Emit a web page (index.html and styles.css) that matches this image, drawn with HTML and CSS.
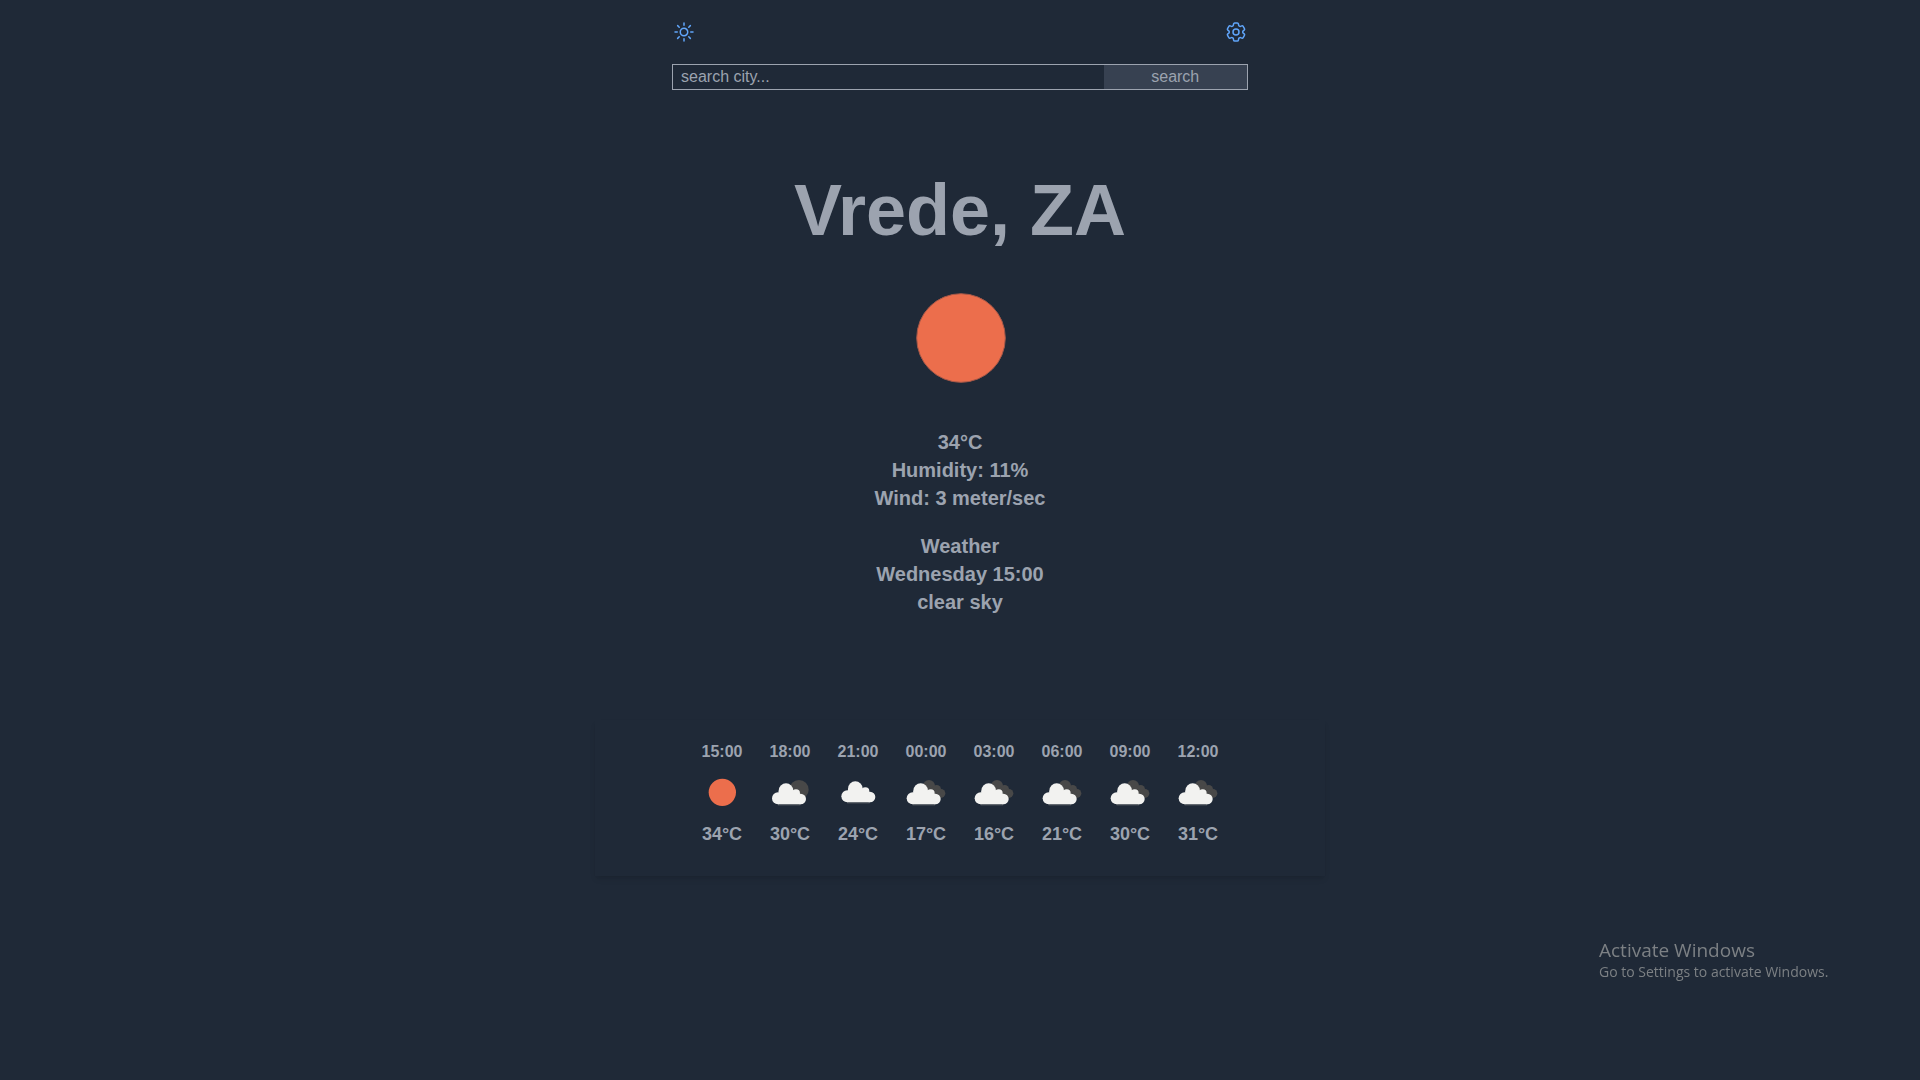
FILE: index.html
```html
<!DOCTYPE html>
<html lang="en">
<head>
<meta charset="utf-8">
<meta name="viewport" content="width=device-width, initial-scale=1">
<title>Weather</title>
<link rel="stylesheet" href="styles.css">
</head>
<body>
<svg class="sprite" aria-hidden="true">
  <symbol id="clear" viewBox="0 0 204 168">
    <circle cx="103" cy="85" r="41" fill="#ec6e4c"/>
  </symbol>
  <symbol id="cloud" viewBox="0 0 204 168">
    <path d="M66 123h67" stroke="#4b5058" stroke-width="3"/>
    <g fill="#f2f2f0">
      <circle cx="66" cy="103" r="18"/>
      <circle cx="90" cy="80" r="22"/>
      <circle cx="120" cy="88" r="12"/>
      <circle cx="134" cy="105" r="16"/>
      <path d="M68 80h52l14 20v21H66z"/>
    </g>
  </symbol>
  <symbol id="few" viewBox="0 0 204 168">
    <circle cx="129" cy="77" r="29" fill="#484848"/>
    <use href="#cloud" width="204" height="168"/>
  </symbol>
  <symbol id="scattered" viewBox="0 0 204 168">
    <use href="#cloud" x="4" y="-6" width="204" height="168"/>
  </symbol>
  <symbol id="broken" viewBox="0 0 204 168">
    <g fill="#484848">
      <circle cx="111" cy="66" r="18"/>
      <circle cx="134" cy="76" r="13"/>
      <circle cx="147" cy="88" r="13"/>
      <path d="M110 76h30l8 25h-24z"/>
    </g>
    <use href="#cloud" x="-4" width="204" height="168"/>
  </symbol>
</svg>

<header class="top">
  <div class="toolbar">
    <button class="icon-button" type="button" aria-label="Toggle theme">
      <svg viewBox="0 0 24 24"><path d="M12 3v2.25m6.364.386l-1.591 1.591M21 12h-2.25m-.386 6.364l-1.591-1.591M12 18.75V21m-4.773-4.227l-1.591 1.591M5.25 12H3m4.227-4.773L5.636 5.636M15.75 12a3.75 3.75 0 11-7.5 0 3.75 3.75 0 017.5 0z"/></svg>
    </button>
    <button class="icon-button" type="button" aria-label="Settings">
      <svg viewBox="0 0 24 24"><path d="M9.594 3.94c.09-.542.56-.94 1.11-.94h2.593c.55 0 1.02.398 1.11.94l.213 1.281c.063.374.313.686.645.87.074.04.147.083.22.127.324.196.72.257 1.075.124l1.217-.456a1.125 1.125 0 011.37.49l1.296 2.247a1.125 1.125 0 01-.26 1.431l-1.003.827c-.293.24-.438.613-.431.992a6.759 6.759 0 010 .255c-.007.378.138.75.43.99l1.005.828c.424.35.534.954.26 1.43l-1.298 2.247a1.125 1.125 0 01-1.369.491l-1.217-.456c-.355-.133-.75-.072-1.076.124a6.57 6.57 0 01-.22.128c-.331.183-.581.495-.644.869l-.213 1.28c-.09.543-.56.941-1.11.941h-2.594c-.55 0-1.02-.398-1.11-.94l-.213-1.281c-.062-.374-.312-.686-.644-.87a6.52 6.52 0 01-.22-.127c-.325-.196-.72-.257-1.076-.124l-1.217.456a1.125 1.125 0 01-1.369-.49l-1.297-2.247a1.125 1.125 0 01.26-1.431l1.004-.827c.292-.24.437-.613.43-.992a6.932 6.932 0 010-.255c.007-.378-.138-.75-.43-.99l-1.004-.828a1.125 1.125 0 01-.26-1.43l1.297-2.247a1.125 1.125 0 011.37-.491l1.216.456c.356.133.751.072 1.076-.124.072-.044.146-.087.22-.128.332-.183.582-.495.644-.869l.214-1.281z"/><path d="M15 12a3 3 0 11-6 0 3 3 0 016 0z"/></svg>
    </button>
  </div>
  <form class="search">
    <input class="search-input" type="text" placeholder="search city..." aria-label="City">
    <button class="search-button" type="button">search</button>
  </form>
</header>

<main class="weather">
  <h1 class="city">Vrede, ZA</h1>
  <svg class="current-icon" viewBox="0 0 200 182" role="img" aria-label="clear sky"><circle cx="101" cy="92" r="44.3" fill="#ec6e4c" stroke="#a65848"/></svg>
  <div class="details">
    <p>34°C</p>
    <p>Humidity: 11%</p>
    <p>Wind: 3 meter/sec</p>
  </div>
  <div class="details">
    <p>Weather</p>
    <p>Wednesday 15:00</p>
    <p>clear sky</p>
  </div>
  <ul class="forecast">
    <li class="slot"><time>15:00</time><svg><use href="#clear"/></svg><span class="temp">34°C</span></li>
    <li class="slot"><time>18:00</time><svg><use href="#few"/></svg><span class="temp">30°C</span></li>
    <li class="slot"><time>21:00</time><svg><use href="#scattered"/></svg><span class="temp">24°C</span></li>
    <li class="slot"><time>00:00</time><svg><use href="#broken"/></svg><span class="temp">17°C</span></li>
    <li class="slot"><time>03:00</time><svg><use href="#broken"/></svg><span class="temp">16°C</span></li>
    <li class="slot"><time>06:00</time><svg><use href="#broken"/></svg><span class="temp">21°C</span></li>
    <li class="slot"><time>09:00</time><svg><use href="#broken"/></svg><span class="temp">30°C</span></li>
    <li class="slot"><time>12:00</time><svg><use href="#broken"/></svg><span class="temp">31°C</span></li>
  </ul>
</main>

<aside class="activation">
  <p class="activation-title">Activate Windows</p>
  <p class="activation-text">Go to Settings to activate Windows.</p>
</aside>
</body>
</html>
```
FILE: styles.css
```css
*, *::before, *::after {
  box-sizing: border-box;
}

body {
  margin: 0;
  min-height: 100vh;
  background: #1f2937;
  color: #9ca3af;
  font: 16px/24px "Liberation Sans", Arial, sans-serif;
}

h1, p, ul {
  margin: 0;
  padding: 0;
}

button, input {
  margin: 0;
  font: inherit;
  color: inherit;
}

.sprite {
  display: none;
}

.top {
  width: 30%;
  min-width: 320px;
  margin: 0 auto;
}

.toolbar {
  display: flex;
  justify-content: space-between;
  padding: 20px 0;
}

.icon-button {
  width: 24px;
  height: 24px;
  padding: 0;
  border: 0;
  background: none;
  color: #60a5fa;
  cursor: pointer;
}

.icon-button svg {
  display: block;
  width: 24px;
  height: 24px;
  fill: none;
  stroke: currentColor;
  stroke-width: 1.5;
  stroke-linecap: round;
  stroke-linejoin: round;
}

.search {
  display: grid;
  grid-template-columns: 3fr 1fr;
  border: 1px solid #9ca3af;
}

.search-input {
  min-width: 0;
  height: 24px;
  padding: 0 8px;
  border: 0;
  background: transparent;
}

.search-input::placeholder {
  color: #9ca3af;
  opacity: 1;
}

.search-button {
  height: 24px;
  padding: 0;
  border: 0;
  background: #374151;
  cursor: pointer;
}

.weather {
  display: flex;
  flex-direction: column;
  align-items: center;
  padding-top: 84px;
  text-align: center;
}

.city {
  font-size: 72px;
  line-height: 72px;
}

.current-icon {
  width: 200px;
  height: 182px;
}

.details {
  font-size: 20px;
  font-weight: 700;
  line-height: 28px;
}

.details + .details {
  margin-top: 20px;
}

.forecast {
  display: flex;
  justify-content: center;
  width: 38%;
  min-width: 584px;
  margin-top: 104px;
  padding: 20px 20px 28px;
  list-style: none;
  font-weight: 700;
  box-shadow: 0 4px 6px -1px rgba(0, 0, 0, 0.1), 0 2px 4px -2px rgba(0, 0, 0, 0.06);
}

.slot {
  display: flex;
  flex-direction: column;
  align-items: center;
}

.slot svg {
  width: 68px;
  height: 56px;
}

.temp {
  font-size: 18px;
  line-height: 28px;
}

/* System notice floating above the page */
.activation {
  position: fixed;
  right: 84px;
  bottom: 98px;
  min-width: 237px;
  color: #7c8084;
  font-family: "Open Sans", "Noto Sans", sans-serif;
}

.activation-title {
  font-size: 19px;
  line-height: 24px;
}

.activation-text {
  font-size: 14px;
  line-height: 20px;
}
```
